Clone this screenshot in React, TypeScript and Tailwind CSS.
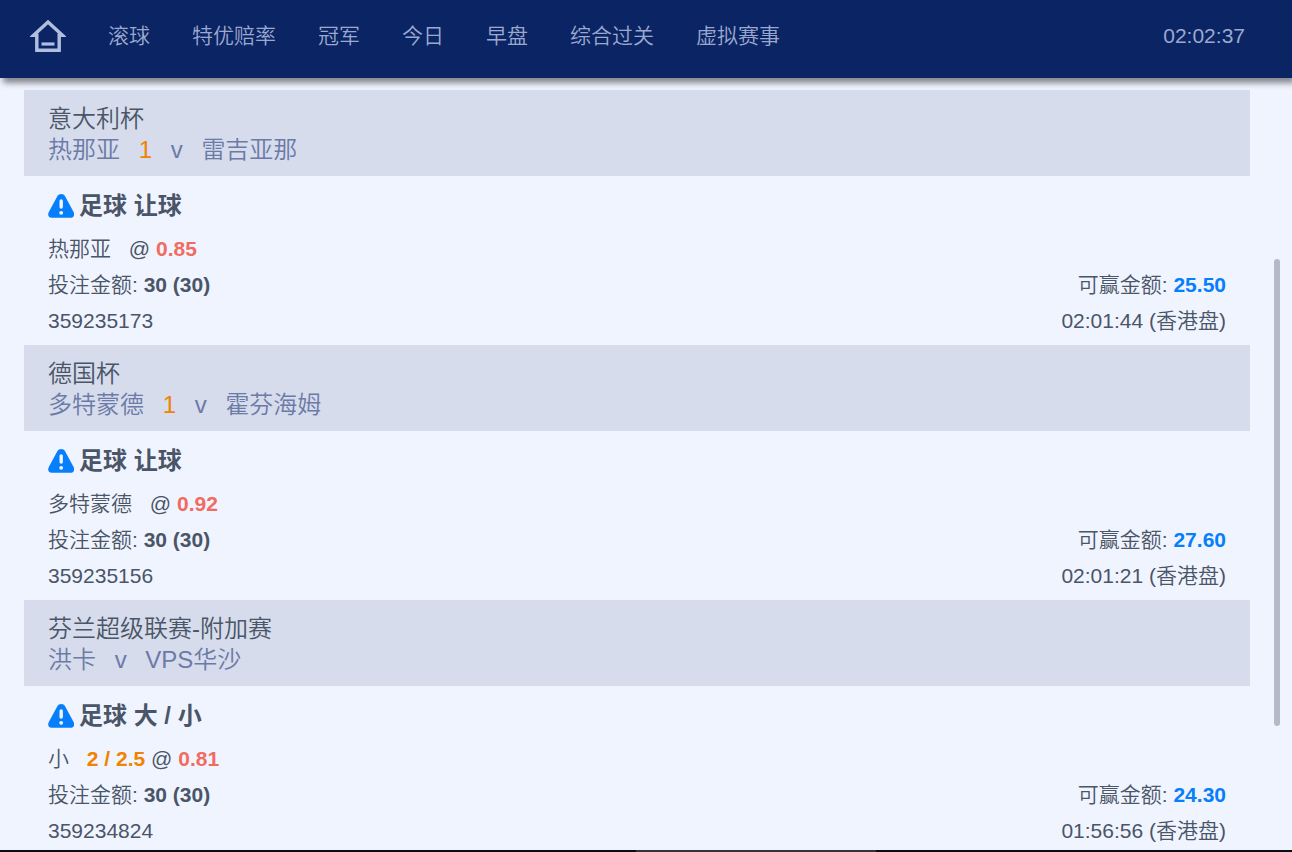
import React from "react";

type Bet = {
  id: string;
  league: string;
  home: string;
  homeScore?: string;
  away: string;
  market: string;
  pick: string;
  line?: string;
  odds: string;
  stake: string;
  win: string;
  time: string;
};

const NAV_ITEMS = ["滚球", "特优赔率", "冠军", "今日", "早盘", "综合过关", "虚拟赛事"];

const BETS: Bet[] = [
  {
    id: "359235173",
    league: "意大利杯",
    home: "热那亚",
    homeScore: "1",
    away: "雷吉亚那",
    market: "足球 让球",
    pick: "热那亚",
    odds: "0.85",
    stake: "30 (30)",
    win: "25.50",
    time: "02:01:44",
  },
  {
    id: "359235156",
    league: "德国杯",
    home: "多特蒙德",
    homeScore: "1",
    away: "霍芬海姆",
    market: "足球 让球",
    pick: "多特蒙德",
    odds: "0.92",
    stake: "30 (30)",
    win: "27.60",
    time: "02:01:21",
  },
  {
    id: "359234824",
    league: "芬兰超级联赛-附加赛",
    home: "洪卡",
    away: "VPS华沙",
    market: "足球 大 / 小",
    pick: "小",
    line: "2 / 2.5",
    odds: "0.81",
    stake: "30 (30)",
    win: "24.30",
    time: "01:56:56",
  },
];

function HomeIcon() {
  return (
    <svg viewBox="0 0 36 34" className="h-[34px] w-9" fill="none" aria-hidden="true">
      <path
        d="M18 3 32.6 16.4H29.2V31.2H6.8V16.4H3.4Z"
        stroke="#b1bee0"
        strokeWidth="3.4"
        strokeMiterlimit="3"
      />
      <path d="M11.5 25H24.5" stroke="#b1bee0" strokeWidth="3.2" />
    </svg>
  );
}

function WarningIcon() {
  return (
    <svg viewBox="0 0 26 24" className="h-6 w-[26px] shrink-0" aria-hidden="true">
      <path
        d="M9.2 2.4C11-.8 15.4-.8 17.2 2.4L25.6 18C27.2 21.2 25.6 23.8 22.6 23.8H3.8C.8 23.8-.8 21.2.8 18Z"
        fill="#087ffa"
      />
      <path d="M13.2 7V13" stroke="#f0f4ff" strokeWidth="3.4" strokeLinecap="round" />
      <circle cx="13.2" cy="18.8" r="1.9" fill="#f0f4ff" />
    </svg>
  );
}

function BetCard({ bet }: { bet: Bet }) {
  return (
    <article>
      <header className="bg-[#d6dceb] px-6 pt-[13px] pb-[11px] text-2xl leading-[31px]">
        <h2>{bet.league}</h2>
        <p className="text-[#6c7aa8]">
          <span className="mr-3">{bet.home}</span>{" "}
          {bet.homeScore && (
            <>
              <span className="mr-3 text-[#f08300]">{bet.homeScore}</span>{" "}
            </>
          )}
          <span className="mr-3">v</span> <span>{bet.away}</span>
        </p>
      </header>
      <div className="px-6 pt-3 pb-1.5 text-[21px] leading-9">
        <h3 className="mb-[7px] flex items-center gap-[5px] text-2xl leading-9 font-bold">
          <WarningIcon />
          {bet.market}
        </h3>
        <p>
          <span className="mr-3">{bet.pick}</span>{" "}
          {bet.line && <b className="font-bold text-[#f08300]">{bet.line} </b>}@{" "}
          <b className="font-bold text-[#f06c60]">{bet.odds}</b>
        </p>
        <div className="flex justify-between">
          <p>
            投注金额: <b className="font-bold">{bet.stake}</b>
          </p>
          <p>
            可赢金额: <b className="font-bold text-[#087ffa]">{bet.win}</b>
          </p>
        </div>
        <div className="flex justify-between">
          <p>{bet.id}</p>
          <p>{bet.time} (香港盘)</p>
        </div>
      </div>
    </article>
  );
}

export default function App() {
  return (
    <div className="flex h-screen flex-col bg-[#f0f4ff] font-['Liberation_Sans','Noto_Sans_CJK_SC',sans-serif] font-[350] text-[#4a5568]">
      <header className="z-10 flex h-[78px] shrink-0 items-center justify-between bg-[#0b2463] pr-[47px] pb-1.5 pl-[30px] text-[21px] leading-8 text-[#9ba9d0] shadow-[3px_5px_6px_rgba(0,0,0,0.45)]">
        <nav className="flex items-center gap-[42px]">
          <a href="#home" aria-label="首页">
            <HomeIcon />
          </a>
          {NAV_ITEMS.map((item) => (
            <a key={item} href={"#" + item} className="whitespace-nowrap">
              {item}
            </a>
          ))}
        </nav>
        <time>02:02:37</time>
      </header>
      <div className="relative min-h-0 flex-1">
        <main className="h-full overflow-y-auto pt-3 pr-[42px] pl-6 [scrollbar-width:none]">
          {BETS.map((bet) => (
            <BetCard key={bet.id} bet={bet} />
          ))}
        </main>
        <div className="absolute top-[23.5%] right-3 h-[60.4%] w-1.5 rounded-full bg-[#b5bac8]" />
      </div>
      <footer className="flex h-0.5 shrink-0 justify-center bg-[#0c0c14]">
        <div className="ml-[220px] w-60 bg-[#333338]" />
      </footer>
    </div>
  );
}
